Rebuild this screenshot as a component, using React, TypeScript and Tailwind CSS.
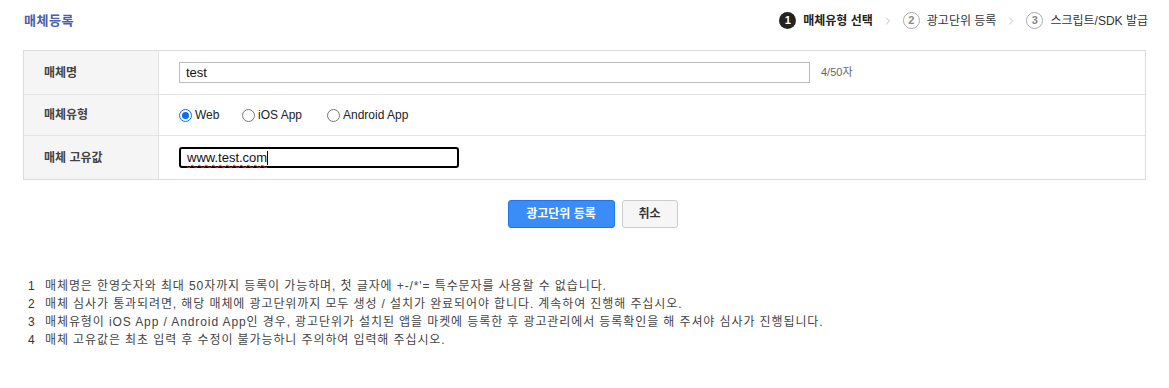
import { ChevronRight } from 'lucide-react';

const font = { fontFamily: '"Liberation Sans", "Noto Sans CJK KR", sans-serif' };

const steps = [
  { n: '1', label: '매체유형 선택', active: true },
  { n: '2', label: '광고단위 등록', active: false },
  { n: '3', label: '스크립트/SDK 발급', active: false },
];

const notes = [
  "매체명은 한영숫자와 최대 50자까지 등록이 가능하며, 첫 글자에 +-/*'= 특수문자를 사용할 수 없습니다.",
  '매체 심사가 통과되려면, 해당 매체에 광고단위까지 모두 생성 / 설치가 완료되어야 합니다. 계속하여 진행해 주십시오.',
  '매체유형이 iOS App / Android App인 경우, 광고단위가 설치된 앱을 마켓에 등록한 후 광고관리에서 등록확인을 해 주셔야 심사가 진행됩니다.',
  '매체 고유값은 최초 입력 후 수정이 불가능하니 주의하여 입력해 주십시오.',
];

const Radio = ({ label, checked }: { label: string; checked?: boolean }) => (
  <label className="flex items-center gap-[3px]">
    <span
      className={`w-[13px] h-[13px] rounded-full border flex items-center justify-center bg-white ${
        checked ? 'border-[#0b6cf0]' : 'border-[#767676]'
      }`}
    >
      {checked && <span className="w-[7px] h-[7px] rounded-full bg-[#0b6cf0]" />}
    </span>
    <span className="text-[12px] text-[#222]">{label}</span>
  </label>
);

const Row = ({ label, children, last }: { label: string; children: React.ReactNode; last?: boolean }) => (
  <div className={`flex ${last ? '' : 'border-b border-[#e3e3e3]'}`}>
    <div className="w-[135px] shrink-0 bg-[#f5f5f5] border-r border-[#e3e3e3] pl-[20px] flex items-center text-[12px] font-bold text-[#444]">
      {label}
    </div>
    <div className="flex-1 pl-[20px] flex items-center">{children}</div>
  </div>
);

export default function App() {
  return (
    <div className="w-[1169px] h-[388px] bg-white" style={font}>
      {/* Header */}
      <div className="flex items-center justify-between pl-[24px] pr-[21px] h-[41px]">
        <h1 className="text-[13px] font-bold text-[#4e5cad] tracking-[0.5px]">매체등록</h1>
        <div className="flex items-center">
          {steps.map((s, i) => (
            <div key={s.n} className="flex items-center">
              {i > 0 && <ChevronRight className="w-[12px] h-[12px] text-[#aaa] mx-[9px]" strokeWidth={1.5} />}
              <span
                className={`w-[17px] h-[17px] rounded-full flex items-center justify-center text-[11px] font-bold ${
                  s.active ? 'bg-[#222] text-white' : 'border border-[#aaa] text-[#888]'
                }`}
              >
                {s.n}
              </span>
              <span className={`ml-[7px] text-[12px] ${s.active ? 'font-bold text-[#222]' : 'text-[#333]'}`}>
                {s.label}
              </span>
            </div>
          ))}
        </div>
      </div>

      {/* Form table */}
      <div className="mx-[23px] mt-[9px] border border-[#dcdcdc] flex flex-col">
        <Row label="매체명">
          <div className="h-[43px] flex items-center">
            <div className="w-[631px] h-[21px] border border-[#bbb] flex items-center px-[6px] text-[13px] text-[#111]">
              test
            </div>
            <span className="ml-[11px] text-[11px] text-[#666]">4/50자</span>
          </div>
        </Row>
        <Row label="매체유형">
          <div className="h-[40px] flex items-center">
            <div className="w-[63px]"><Radio label="Web" checked /></div>
            <div className="w-[85px]"><Radio label="iOS App" /></div>
            <Radio label="Android App" />
          </div>
        </Row>
        <Row label="매체 고유값" last>
          <div className="h-[43px] flex items-center">
            <div className="w-[280px] h-[21px] border-2 border-black rounded-[3px] flex items-center px-[6px] text-[13px] text-[#111]">
              <span className="underline decoration-wavy decoration-red-500 decoration-1 underline-offset-2">www.test.com</span>
              <span className="w-px h-[14px] bg-black" />
            </div>
          </div>
        </Row>
      </div>

      {/* Buttons */}
      <div className="flex justify-center gap-[7px] mt-[20px] pl-[16px]">
        <button className="w-[107px] h-[28px] rounded-[3px] bg-[#3a8cf7] border border-[#1f76ec] text-white text-[12px] font-bold">
          광고단위 등록
        </button>
        <button className="w-[56px] h-[28px] rounded-[3px] bg-[#f6f6f6] border border-[#ccc] text-[#333] text-[12px] font-bold">
          취소
        </button>
      </div>

      {/* Notes */}
      <ol className="mt-[49px] pl-[28px] flex flex-col">
        {notes.map((t, i) => (
          <li key={i} className="flex h-[18px] items-center text-[12px] text-[#444]">
            <span className="w-[17px] text-[#333]">{i + 1}</span>
            <span className="tracking-[0.9px]">{t}</span>
          </li>
        ))}
      </ol>
    </div>
  );
}
